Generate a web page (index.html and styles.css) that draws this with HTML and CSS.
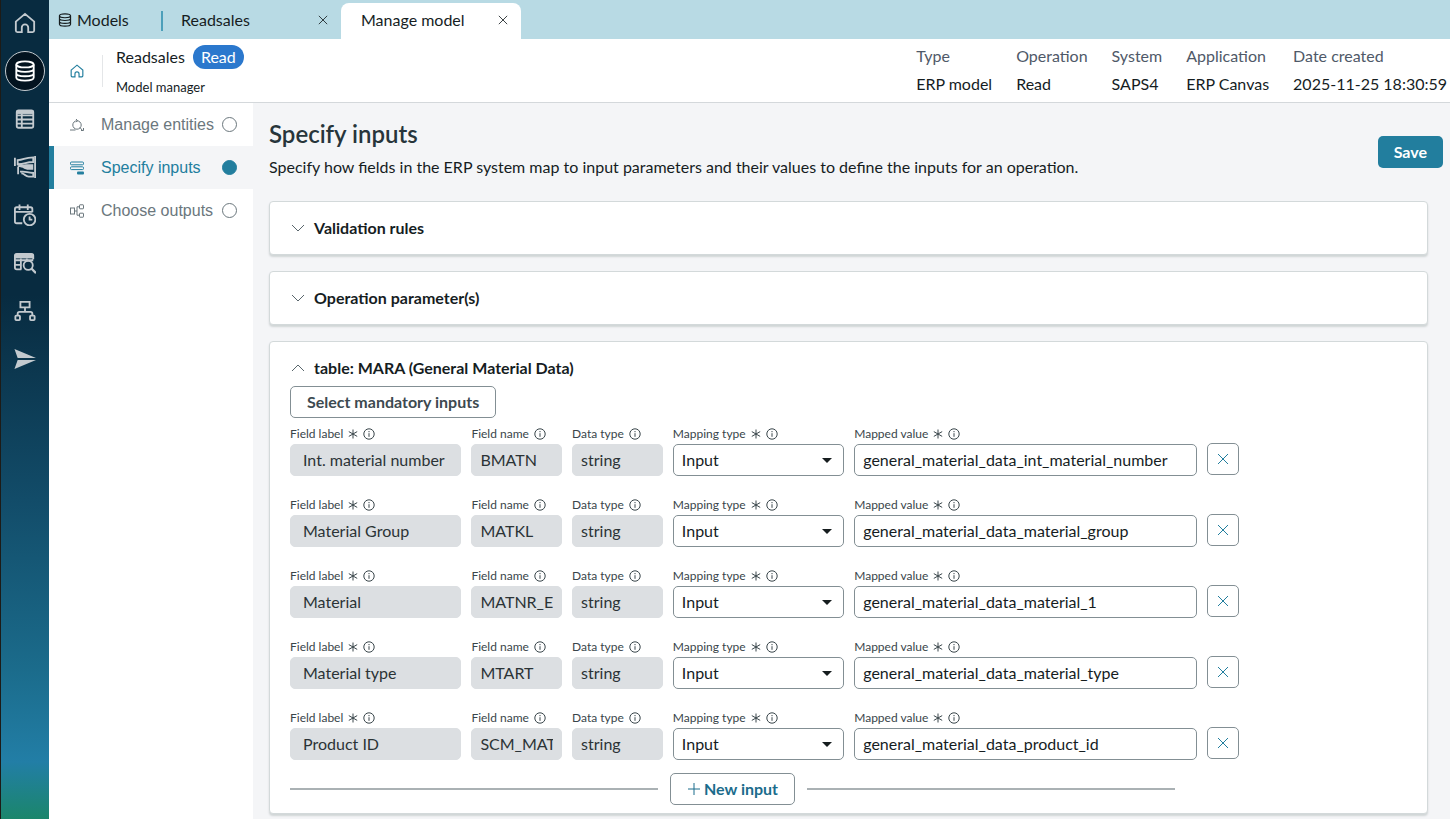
FILE: index.html
```
<!DOCTYPE html>
<html lang="en">
<head>
    <meta charset="utf-8">
    <title>Manage model</title>
    <link rel="stylesheet" href="styles.css">
</head>
<body>
    <!-- shared icons -->
    <svg class="sprite" aria-hidden="true">
        <symbol id="home" viewBox="0 0 24 24">
            <path d="M2 10.500 12 2l10 8.500v9.800q0 1.700-1.700 1.700h-4.800v-5a3.500 3.500 0 0 0-7 0v5H3.700q-1.700 0-1.700-1.700z"/>
        </symbol>
        <symbol id="database" viewBox="0 0 24 24">
            <ellipse cx="12" cy="4.800" rx="9.500" ry="3.300"/>
            <path d="M2.500 4.800v14.400c0 4.400 19 4.400 19 0V4.800M2.500 9.600c0 4.400 19 4.400 19 0M2.500 14.400c0 4.400 19 4.400 19 0"/>
        </symbol>
        <symbol id="close" viewBox="0 0 12 12"><path d="M1 1l10 10M11 1L1 11"/></symbol>
        <symbol id="down" viewBox="0 0 14 8"><path d="M1 1l6 6 6-6"/></symbol>
        <symbol id="up" viewBox="0 0 14 8"><path d="M1 7l6-6 6 6"/></symbol>
        <symbol id="info" viewBox="0 0 12 12"><circle cx="6" cy="6" r="5.200"/><path d="M6 5.200v3.600M6 3v1.200"/></symbol>
        <symbol id="star" viewBox="0 0 10 10"><path d="M5 .5v9M.8 2.600l8.400 4.800M9.200 2.600L.8 7.400"/></symbol>
    </svg>

    <nav class="rail" aria-label="Main">
        <a href="#" aria-label="Home"><svg><use href="#home"/></svg></a>
        <a href="#" class="active" aria-label="Models"><svg><use href="#database"/></svg></a>
        <a href="#" aria-label="Lists">
            <svg viewBox="0 0 24 24"><rect x="3" y="2.500" width="18" height="19" rx="2"/><path d="M3 8h18M3 12.500h18M3 17h18M8.500 6v15"/><path d="M3 4.500h18" stroke-width="4"/></svg>
        </a>
        <a href="#" aria-label="Mappings">
            <svg viewBox="0 0 24 24">
                <path d="M1 2v9M23 0v24M4.500 12v8"/>
                <path d="M4 4.500c7 0 7-3 17-3v5c-9 0-8 2.500-17 2.500z"/>
                <path class="solid" d="M4 10c7 0 6-1 10-1h7v6h-5c-5 0-5-3-12-3z"/>
                <path d="M6.500 17h3c5 0 5 1.500 11.500 1.500v4h-5c-4 0-4-3.500-8-3.500"/>
            </svg>
        </a>
        <a href="#" aria-label="Schedules">
            <svg viewBox="0 0 24 24"><path d="M9 21H3q-2 0-2-2V5.500q0-2 2-2h15q2 0 2 2V9M1 8.500h19M6 .5v6M15 .5v6"/><circle cx="17" cy="17" r="6.300"/><path d="M17 13.500V17h3"/></svg>
        </a>
        <a href="#" aria-label="Data browser">
            <svg viewBox="0 0 24 24"><path d="M8 19H3q-2 0-2-2V4q0-2 2-2h16q2 0 2 2v4M1 9h20M1 14h7M7.500 7v12M14 7v2"/><path d="M1 4.500h20" stroke-width="5"/><circle cx="15.500" cy="14.500" r="5"/><path d="M19 18l5 5" stroke-width="2.500"/></svg>
        </a>
        <a href="#" aria-label="Hierarchy">
            <svg viewBox="0 0 24 24"><path d="M7 2h10v6H7zM12 8v5M4 17v-2q0-2 2-2h12q2 0 2 2v2"/><rect x="1.500" y="17" width="5" height="5" rx="1"/><rect x="17.500" y="17" width="5" height="5" rx="1"/></svg>
        </a>
        <a href="#" aria-label="Send">
            <svg viewBox="0 0 24 24"><path class="solid" d="M.5 1 24 11H4zM.5 23 24 13H4z"/></svg>
        </a>
    </nav>

    <div class="app">
        <div class="tabs">
            <a href="#" class="tab tab-models"><svg><use href="#database"/></svg>Models</a>
            <div class="tab tab-divided">
                <a href="#">Readsales</a>
                <button type="button" aria-label="Close Readsales"><svg><use href="#close"/></svg></button>
            </div>
            <div class="tab tab-current">
                <a href="#">Manage model</a>
                <button type="button" aria-label="Close Manage model"><svg><use href="#close"/></svg></button>
            </div>
        </div>

        <header class="header">
            <a href="#" class="header-home" aria-label="Model home"><svg><use href="#home"/></svg></a>
            <div class="model">
                <div class="model-name">Readsales <span class="badge">Read</span></div>
                <div class="model-sub">Model manager</div>
            </div>
            <dl class="meta">
                <div><dt>Type</dt><dd>ERP model</dd></div>
                <div><dt>Operation</dt><dd>Read</dd></div>
                <div><dt>System</dt><dd>SAPS4</dd></div>
                <div><dt>Application</dt><dd>ERP Canvas</dd></div>
                <div><dt>Date created</dt><dd>2025-11-25 18:30:59</dd></div>
            </dl>
        </header>

        <div class="content">
            <nav class="steps" aria-label="Steps">
                <a href="#">
                    <svg viewBox="0 0 14 14"><circle cx="7" cy="7" r="4.200"/><path d="M0 12h5.500M6 1l1.500 1.600L6 4.200M10 9.500l2 2.500M11 12.500h2.500V10"/></svg>
                    Manage entities<i></i>
                </a>
                <a href="#" class="active">
                    <svg viewBox="0 0 14 14"><rect x=".5" y="1" width="13" height="2.800" rx="1"/><rect x=".5" y="5.800" width="13" height="2.800" rx="1"/><rect class="solid" x="7" y="10.500" width="7" height="3" rx="1"/></svg>
                    Specify inputs<i></i>
                </a>
                <a href="#">
                    <svg viewBox="0 0 14 14"><rect x=".5" y="4" width="4" height="6"/><rect x="9.500" y=".8" width="4" height="4" rx=".5"/><rect x="9.500" y="9.200" width="4" height="4" rx=".5"/><path d="M4.500 7H7M9.500 2.800H7v8.400h2.500"/></svg>
                    Choose outputs<i></i>
                </a>
            </nav>

            <main class="main">
                <div class="title-row">
                    <div>
                        <h1>Specify inputs</h1>
                        <p>Specify how fields in the ERP system map to input parameters and their values to define the inputs for an operation.</p>
                    </div>
                    <button type="button" class="btn btn-save">Save</button>
                </div>

                <section class="card">
                    <button type="button" class="card-title" aria-expanded="false"><svg><use href="#down"/></svg>Validation rules</button>
                </section>
                <section class="card">
                    <button type="button" class="card-title" aria-expanded="false"><svg><use href="#down"/></svg>Operation parameter(s)</button>
                </section>
                <section class="card card-open">
                    <button type="button" class="card-title" aria-expanded="true"><svg><use href="#up"/></svg>table: MARA (General Material Data)</button>
                    <button type="button" class="btn btn-select">Select mandatory inputs</button>

                    <div class="rows">
                        <div class="row">
                            <div class="field field-label"><label for="label1">Field label <svg><use href="#star"/></svg><svg class="info"><use href="#info"/></svg></label><input id="label1" value="Int. material number" readonly></div>
                            <div class="field"><label for="name1">Field name <svg class="info"><use href="#info"/></svg></label><input id="name1" value="BMATN" readonly></div>
                            <div class="field"><label for="type1">Data type <svg class="info"><use href="#info"/></svg></label><input id="type1" value="string" readonly></div>
                            <div class="field"><label for="map1">Mapping type <svg><use href="#star"/></svg><svg class="info"><use href="#info"/></svg></label><div class="select"><select id="map1"><option>Input</option></select></div></div>
                            <div class="field"><label for="value1">Mapped value <svg><use href="#star"/></svg><svg class="info"><use href="#info"/></svg></label><input id="value1" value="general_material_data_int_material_number"></div>
                            <button type="button" class="btn remove" aria-label="Remove input"><svg><use href="#close"/></svg></button>
                        </div>
                        <div class="row">
                            <div class="field field-label"><label for="label2">Field label <svg><use href="#star"/></svg><svg class="info"><use href="#info"/></svg></label><input id="label2" value="Material Group" readonly></div>
                            <div class="field"><label for="name2">Field name <svg class="info"><use href="#info"/></svg></label><input id="name2" value="MATKL" readonly></div>
                            <div class="field"><label for="type2">Data type <svg class="info"><use href="#info"/></svg></label><input id="type2" value="string" readonly></div>
                            <div class="field"><label for="map2">Mapping type <svg><use href="#star"/></svg><svg class="info"><use href="#info"/></svg></label><div class="select"><select id="map2"><option>Input</option></select></div></div>
                            <div class="field"><label for="value2">Mapped value <svg><use href="#star"/></svg><svg class="info"><use href="#info"/></svg></label><input id="value2" value="general_material_data_material_group"></div>
                            <button type="button" class="btn remove" aria-label="Remove input"><svg><use href="#close"/></svg></button>
                        </div>
                        <div class="row">
                            <div class="field field-label"><label for="label3">Field label <svg><use href="#star"/></svg><svg class="info"><use href="#info"/></svg></label><input id="label3" value="Material" readonly></div>
                            <div class="field"><label for="name3">Field name <svg class="info"><use href="#info"/></svg></label><input id="name3" value="MATNR_EXT" readonly></div>
                            <div class="field"><label for="type3">Data type <svg class="info"><use href="#info"/></svg></label><input id="type3" value="string" readonly></div>
                            <div class="field"><label for="map3">Mapping type <svg><use href="#star"/></svg><svg class="info"><use href="#info"/></svg></label><div class="select"><select id="map3"><option>Input</option></select></div></div>
                            <div class="field"><label for="value3">Mapped value <svg><use href="#star"/></svg><svg class="info"><use href="#info"/></svg></label><input id="value3" value="general_material_data_material_1"></div>
                            <button type="button" class="btn remove" aria-label="Remove input"><svg><use href="#close"/></svg></button>
                        </div>
                        <div class="row">
                            <div class="field field-label"><label for="label4">Field label <svg><use href="#star"/></svg><svg class="info"><use href="#info"/></svg></label><input id="label4" value="Material type" readonly></div>
                            <div class="field"><label for="name4">Field name <svg class="info"><use href="#info"/></svg></label><input id="name4" value="MTART" readonly></div>
                            <div class="field"><label for="type4">Data type <svg class="info"><use href="#info"/></svg></label><input id="type4" value="string" readonly></div>
                            <div class="field"><label for="map4">Mapping type <svg><use href="#star"/></svg><svg class="info"><use href="#info"/></svg></label><div class="select"><select id="map4"><option>Input</option></select></div></div>
                            <div class="field"><label for="value4">Mapped value <svg><use href="#star"/></svg><svg class="info"><use href="#info"/></svg></label><input id="value4" value="general_material_data_material_type"></div>
                            <button type="button" class="btn remove" aria-label="Remove input"><svg><use href="#close"/></svg></button>
                        </div>
                        <div class="row">
                            <div class="field field-label"><label for="label5">Field label <svg><use href="#star"/></svg><svg class="info"><use href="#info"/></svg></label><input id="label5" value="Product ID" readonly></div>
                            <div class="field"><label for="name5">Field name <svg class="info"><use href="#info"/></svg></label><input id="name5" value="SCM_MATID" readonly></div>
                            <div class="field"><label for="type5">Data type <svg class="info"><use href="#info"/></svg></label><input id="type5" value="string" readonly></div>
                            <div class="field"><label for="map5">Mapping type <svg><use href="#star"/></svg><svg class="info"><use href="#info"/></svg></label><div class="select"><select id="map5"><option>Input</option></select></div></div>
                            <div class="field"><label for="value5">Mapped value <svg><use href="#star"/></svg><svg class="info"><use href="#info"/></svg></label><input id="value5" value="general_material_data_product_id"></div>
                            <button type="button" class="btn remove" aria-label="Remove input"><svg><use href="#close"/></svg></button>
                        </div>
                    </div>

                    <div class="add">
                        <button type="button" class="btn btn-new"><svg viewBox="0 0 14 14"><path d="M7 1v12M1 7h12"/></svg>New input</button>
                    </div>
                </section>
            </main>
        </div>
    </div>
</body>
</html>
```
FILE: styles.css
```
* {
    box-sizing: border-box;
}
body {
    margin: 0;
    height: 100vh;
    display: flex;
    overflow: hidden;
    font-family: Lato, sans-serif;
    font-size: 16px;
    line-height: 20px;
    color: #161d1f;
    background-color: #f4f5f7;
}
a {
    color: inherit;
    text-decoration: none;
}
button, input, select {
    font: inherit;
    color: inherit;
    margin: 0;
}
button {
    padding: 0;
    border: 0;
    background: none;
}
svg {
    flex: none;
    fill: none;
    stroke: currentColor;
}
.solid {
    fill: currentColor;
    stroke: none;
}
.sprite {
    position: absolute;
    width: 0;
    height: 0;
}

/* left rail */
.rail {
    flex: none;
    width: 49px;
    border-left: 1px solid #1d1b17;
    background: linear-gradient(#082b40 0, #082b40 36%, #124c69 61%, #1b6c8c 82%, #227ea6 93%, #1b866b 100%);
    color: #c3cacf;
}
.rail a {
    display: flex;
    align-items: center;
    justify-content: center;
    height: 40px;
    width: 40px;
    margin: 3px 4px 8px;
    border-radius: 50%;
}
.rail svg {
    width: 22px;
    height: 22px;
    stroke-width: 2;
}
.rail .active {
    border: 1px solid #c3cacf;
    background-color: #03131f;
    color: #fff;
}

.app {
    flex: 1;
    min-width: 0;
    display: flex;
    flex-direction: column;
}

/* tabs */
.tabs {
    flex: none;
    display: flex;
    align-items: flex-end;
    height: 39px;
    background-color: #b8dae4;
}
.tab {
    display: flex;
    align-items: center;
    width: 180px;
    height: 36px;
    padding: 0 11px 2px 20px;
}
.tab a {
    flex: 1;
}
.tab button {
    display: flex;
    padding: 2px;
}
.tab svg {
    width: 10px;
    height: 10px;
}
.tab-models {
    width: 112px;
    padding: 0 9px 2px;
    gap: 5px;
}
.tab-models svg {
    width: 14px;
    height: 14px;
    stroke-width: 2;
}
.tab-divided {
    background: linear-gradient(#4c9fba, #4c9fba) 0 50% / 2px 20px no-repeat;
}
.tab-current {
    border-radius: 8px 8px 0 0;
    background-color: #fff;
}

/* header */
.header {
    flex: none;
    display: flex;
    align-items: center;
    height: 64px;
    padding: 0 3px 0 21px;
    background-color: #fff;
    border-bottom: 1px solid #d4d8db;
}
.header-home {
    display: flex;
    align-items: center;
    height: 32px;
    padding-right: 18px;
    border-right: 1px solid #e4e6e8;
    color: #227e9e;
}
.header-home svg {
    width: 14px;
    height: 14px;
    stroke-width: 2;
}
.model {
    margin-left: 13px;
}
.model-name {
    display: flex;
    align-items: center;
    gap: 8px;
    height: 24px;
}
.badge {
    padding: 2px 8px;
    border-radius: 12px;
    background-color: #2b78cd;
    color: #fff;
}
.model-sub {
    margin-top: 8px;
    font-size: 13px;
    line-height: 20px;
}
.meta {
    display: flex;
    gap: 24px;
    margin: 0 0 2px auto;
}
.meta dt {
    margin-bottom: 8px;
    color: #4f5968;
}
.meta dd {
    margin: 0;
}

.content {
    flex: 1;
    display: flex;
    min-height: 0;
}

/* step list */
.steps {
    flex: none;
    width: 204px;
    background-color: #fff;
    font-family: "Liberation Sans", Arial, sans-serif;
    color: #6b777d;
    white-space: nowrap;
}
.steps a {
    display: flex;
    align-items: center;
    height: 43px;
    padding: 0 16px;
    border-left: 5px solid transparent;
}
.steps svg {
    width: 14px;
    height: 14px;
    margin-right: 17px;
}
.steps i {
    width: 15px;
    height: 15px;
    margin-left: auto;
    border: 1px solid currentColor;
    border-radius: 50%;
}
.steps .active {
    border-left-color: #227e9e;
    background-color: #f4f5f7;
    color: #227e9e;
}
.steps .active i {
    background-color: currentColor;
}

/* main area */
.main {
    flex: 1;
    min-width: 0;
    padding: 16px 22px 0 16px;
}
.title-row {
    display: flex;
    justify-content: space-between;
    align-items: center;
    margin: 0 -15px 24px 0;
}
h1 {
    margin: 0;
    font-size: 24px;
    font-weight: 600;
    line-height: 30px;
    color: #27353b;
}
.title-row p {
    margin: 8px 0 0;
}
.btn {
    height: 32px;
    border: 1px solid #838f94;
    border-radius: 5px;
    background-color: #fff;
    font-weight: bold;
}
.btn-save {
    margin-top: 8px;
    padding: 0 16px;
    border: 0;
    background-color: #227e9e;
    color: #fff;
}
.card {
    margin-bottom: 16px;
    padding: 16px 20px;
    border: 1px solid #d3d9da;
    border-radius: 4px;
    background-color: #fff;
    box-shadow: 0 2px 2px #d0d5d6;
}
.card-open {
    padding-bottom: 8px;
}
.card-title {
    display: flex;
    align-items: center;
    gap: 9px;
    font-weight: bold;
}
.card-title svg {
    width: 14px;
    height: 8px;
    margin-left: 1px;
    color: #59666c;
}
.btn-select {
    margin-top: 8px;
    padding: 0 16px;
    color: #3d4a50;
}

/* input rows */
.rows {
    display: grid;
    gap: 21px;
    max-width: 949px;
    margin-top: 8px;
}
.row {
    display: grid;
    grid-template-columns: 17fr 9fr 9fr 17fr 34fr 32px;
    gap: 10px;
    align-items: end;
}
.field {
    min-width: 0;
}
.field label {
    display: flex;
    align-items: center;
    gap: 5px;
    height: 16px;
    margin-bottom: 2px;
    font-size: 12px;
    line-height: 16px;
    color: #39454a;
    white-space: nowrap;
}
.field svg {
    width: 10px;
    height: 10px;
}
.field svg.info {
    width: 12px;
    height: 12px;
}
.field input, .field select {
    display: block;
    width: 100%;
    height: 32px;
    padding: 0 8px;
    border: 1px solid #838f94;
    border-radius: 5px;
    background-color: #fff;
    outline: 0;
}
.field input {
    padding-bottom: 2px;
}
.field input:read-only {
    border-color: #dcdfe2;
    background-color: #dcdfe2;
    color: #2b3336;
}
.field-label input {
    padding: 0 12px 2px;
}
.select {
    position: relative;
}
.field select {
    appearance: none;
}
.select::after {
    content: "";
    position: absolute;
    top: 14px;
    right: 12px;
    border: 5px solid transparent;
    border-top: 5px solid #161d1f;
    border-bottom: 0;
    pointer-events: none;
}
.remove {
    display: flex;
    align-items: center;
    justify-content: center;
    margin-bottom: 1px;
    color: #227e9e;
}
.remove svg {
    width: 12px;
    height: 12px;
}
.add {
    display: flex;
    align-items: center;
    gap: 12px;
    max-width: 885px;
    margin-top: 13px;
}
.add::before, .add::after {
    content: "";
    flex: 1;
    height: 2px;
    background-color: #aab1b4;
}
.btn-new {
    display: flex;
    align-items: center;
    gap: 3px;
    padding: 0 16px;
    color: #1b6c8c;
}
.btn-new svg {
    width: 14px;
    height: 14px;
}
```
